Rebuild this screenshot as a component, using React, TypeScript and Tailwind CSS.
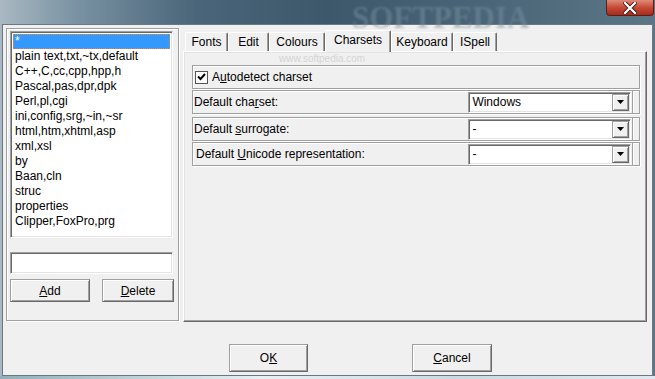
import React from "react";

const items = [
  "*",
  "plain text,txt,~tx,default",
  "C++,C,cc,cpp,hpp,h",
  "Pascal,pas,dpr,dpk",
  "Perl,pl,cgi",
  "ini,config,srg,~in,~sr",
  "html,htm,xhtml,asp",
  "xml,xsl",
  "by",
  "Baan,cln",
  "struc",
  "properties",
  "Clipper,FoxPro,prg",
];

const sunken =
  "border border-t-[#a0a0a0] border-l-[#a0a0a0] border-r-white border-b-white shadow-[inset_1px_1px_0_#696969,inset_-1px_-1px_0_#e3e3e3]";
const raised =
  "border border-t-[#a0a0a0] border-l-[#a0a0a0] border-r-[#696969] border-b-[#696969] shadow-[inset_1px_1px_0_#fff,inset_-1px_-1px_0_#a0a0a0] bg-[#f0f0f0]";
const etched =
  "border border-[#a0a0a0] shadow-[inset_1px_1px_0_#fff,1px_1px_0_#fff]";

function Arrow() {
  return (
    <svg width="7" height="4" viewBox="0 0 7 4">
      <path d="M0 0h7L3.5 4z" fill="#000" />
    </svg>
  );
}

function Combo({ value }: { value: string }) {
  return (
    <div className={`w-[163px] h-[21px] bg-white flex items-center ${sunken}`}>
      <span className="flex-1 pl-[3px] leading-none">{value}</span>
      <div className={`w-[17px] h-[17px] mr-[1px] flex items-center justify-center ${raised}`}>
        <Arrow />
      </div>
    </div>
  );
}

function Row({
  label,
  value,
  className = "",
  labelPad = "pl-[1px]",
}: {
  label: React.ReactNode;
  value: string;
  className?: string;
  labelPad?: string;
}) {
  return (
    <div className={`w-[448px] h-[24px] flex items-center ${etched} ${className}`}>
      <div className={`w-[276px] ${labelPad}`}>{label}</div>
      <Combo value={value} />
      <div className="ml-[1px] h-full w-[7px] border-l border-[#a0a0a0] shadow-[inset_1px_0_0_#fff]" />
    </div>
  );
}

function Tab({
  label,
  w,
  active = false,
}: {
  label: string;
  w: string;
  active?: boolean;
}) {
  return (
    <div
      className={`${w} ${
        active ? "h-[22px] -mb-[1px] z-10 pb-[3px]" : "h-[19px] pb-[1px]"
      } relative flex items-center justify-center bg-[#f0f0f0] border-t border-l border-t-white border-l-white border-r border-r-[#696969] shadow-[inset_-1px_0_0_#a0a0a0] rounded-t-[2px]`}
    >
      {label}
    </div>
  );
}

function Button({
  children,
  w,
  h,
}: {
  children: React.ReactNode;
  w: string;
  h: string;
}) {
  return (
    <div className={`${w} ${h} flex items-center justify-center ${raised}`}>
      {children}
    </div>
  );
}

export default function App() {
  return (
    <div className="w-[655px] h-[379px] overflow-hidden relative bg-[linear-gradient(90deg,#a9b8c2_0%,#7891a2_12%,#4a6579_30%,#3d586b_50%,#4b6678_75%,#5b7686_100%)] font-['Liberation_Sans',Arial,sans-serif] text-[12px] text-black">
      {/* title bar */}
      <div className="h-[24px] flex justify-end relative">
        <div className="absolute left-[352px] top-[-5px] text-[31px] font-bold tracking-[0px] font-['Liberation_Serif',serif] text-[#7790a0] opacity-50 blur-[1px] select-none">
          SOFTPEDIA
        </div>
        <div className="w-[48px] h-[16px] mr-[1px] rounded-b-[4px] border border-t-0 border-[#5a1e16] bg-[linear-gradient(180deg,#e0897a_0%,#c64a36_50%,#a52c1c_100%)] flex items-center justify-center">
          <svg width="14" height="12" viewBox="0 0 14 12">
            <path d="M2 1 L12 11 M12 1 L2 11" stroke="#3a1a14" strokeWidth="4" strokeLinecap="square" />
            <path d="M2 1 L12 11 M12 1 L2 11" stroke="#fff" strokeWidth="2.2" strokeLinecap="square" />
          </svg>
        </div>
      </div>

      {/* client area */}
      <div className="ml-[2px] w-[651px] h-[352px] bg-[#f0f0f0] border border-[#6c7780] pl-[3px] pt-[3px]">
        <div className="flex">
          {/* left panel */}
          <div className={`w-[173px] h-[293px] px-[3px] pt-[2px] flex flex-col ${etched}`}>
            <div className={`w-[163px] h-[207px] bg-white p-[2px] ${sunken}`}>
              {items.map((t, i) => (
                <div
                  key={i}
                  className={`h-[15px] leading-[15px] pl-[2px] whitespace-nowrap ${
                    i === 0
                      ? "bg-[#3399ff] text-white outline-1 outline-dotted outline-[#e08a3a] -outline-offset-1"
                      : ""
                  }`}
                >
                  {t}
                </div>
              ))}
            </div>
            <div className={`mt-[14px] w-[163px] h-[22px] bg-white ${sunken}`} />
            <div className="mt-[5px] flex">
              <Button w="w-[80px]" h="h-[23px]">
                <span>
                  <u>A</u>dd
                </span>
              </Button>
              <div className="ml-[12px]">
                <Button w="w-[72px]" h="h-[23px]">
                  <span>
                    <u>D</u>elete
                  </span>
                </Button>
              </div>
            </div>
          </div>

          {/* tab control */}
          <div className="ml-[4px] mt-[2px] w-[464px] flex flex-col relative">
            <div className="h-[21px] flex items-end pl-[2px]">
              <Tab label="Fonts" w="w-[43px]" />
              <Tab label="Edit" w="w-[41px]" />
              <Tab label="Colours" w="w-[56px]" />
              <Tab label="Charsets" w="w-[66px]" active />
              <Tab label="Keyboard" w="w-[62px]" />
              <Tab label="ISpell" w="w-[44px]" />
            </div>
            <div className="h-[271px] border border-t-white border-l-white border-r-[#696969] border-b-[#696969] shadow-[inset_-1px_-1px_0_#a0a0a0,inset_1px_1px_0_#e3e3e3] pl-[8px] pt-[13px] relative">
              <div className="absolute left-[95px] top-[2px] text-[10px] leading-[10px] text-[#d4d4d4] pointer-events-none select-none">
                www.softpedia.com
              </div>
              <div className={`w-[448px] h-[24px] flex items-center pl-[2px] ${etched}`}>
                <div className="w-[13px] h-[13px] bg-white border border-[#555] flex items-center justify-center">
                  <svg width="9" height="8" viewBox="0 0 9 8">
                    <path d="M1 3.5 L3.5 6 L8 1" stroke="#000" strokeWidth="2" fill="none" />
                  </svg>
                </div>
                <span className="ml-[4px]">
                  A<u>u</u>todetect charset
                </span>
              </div>
              <Row
                className="mt-[1px]"
                label={
                  <span>
                    Default cha<u>r</u>set:
                  </span>
                }
                value="Windows"
              />
              <Row
                className="mt-[3px]"
                label={
                  <span>
                    Default <u>s</u>urrogate:
                  </span>
                }
                value="-"
              />
              <Row
                className="mt-[1px]"
                labelPad="pl-[3px]"
                label={
                  <span>
                    Default <u>U</u>nicode representation:
                  </span>
                }
                value="-"
              />
            </div>
          </div>
        </div>

        {/* bottom buttons */}
        <div className="mt-[22px] ml-[223px] flex">
          <Button w="w-[79px]" h="h-[28px]">
            <span>
              O<u>K</u>
            </span>
          </Button>
          <div className="ml-[104px]">
            <Button w="w-[80px]" h="h-[28px]">
              <span>
                <u>C</u>ancel
              </span>
            </Button>
          </div>
        </div>
      </div>
      <div className="h-[3px] bg-[linear-gradient(90deg,#8fb0b8,#e8f0f4_40%,#c9d8e2_70%,#dfe8ee)]" />
    </div>
  );
}
